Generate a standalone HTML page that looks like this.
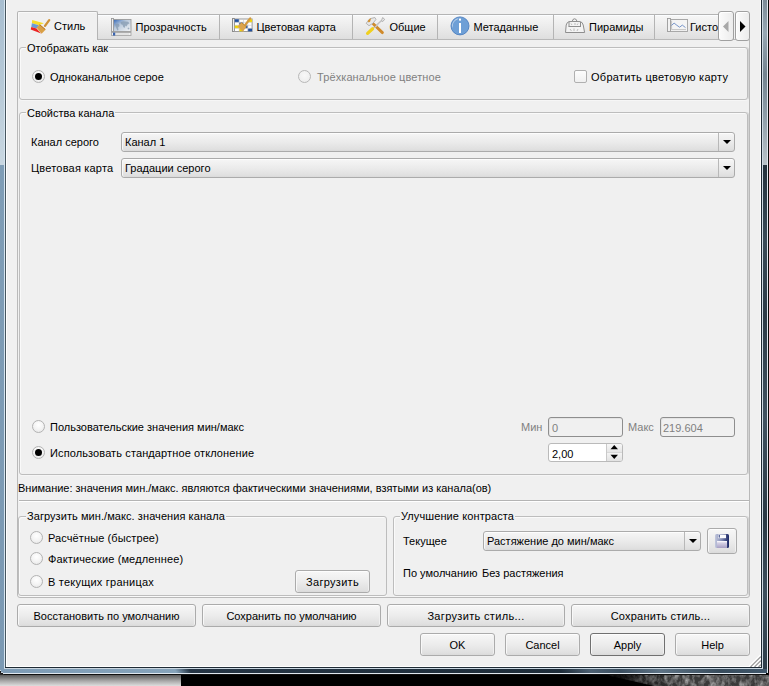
<!DOCTYPE html>
<html><head><meta charset="utf-8">
<style>
*{box-sizing:border-box}
html,body{margin:0;padding:0;width:769px;height:686px;overflow:hidden;background:#000}
body{position:relative;font-family:"Liberation Sans",sans-serif;font-size:11px;color:#000}
.a{position:absolute}
.t{position:absolute;font-size:11px;line-height:13px;white-space:nowrap;color:#000}
.g{color:#808080}
.gb{position:absolute;border:1px solid #bdbdbd;border-radius:3px;box-shadow:inset 1px 1px 0 #fafafa,0 1px 0 #fafafa}
.gbt{position:absolute;background:#f0f0f0;padding:0 1px;font-size:11px;line-height:13px;white-space:nowrap}
.btn{position:absolute;border:1px solid #ababab;border-radius:3px;background:linear-gradient(#f7f7f7,#ececec 50%,#e0e0e0 90%,#dadada);box-shadow:inset 0 1px 0 #fdfdfd,inset 1px 0 0 #f8f8f8,inset -1px 0 0 #f0f0f0;text-align:center;line-height:23px;font-size:11px;white-space:nowrap}
.cb{position:absolute;border:1px solid #ababab;border-radius:3px;background:linear-gradient(#f6f6f6,#ebebeb 50%,#e0e0e0 90%,#dadada);box-shadow:inset 0 1px 0 #fdfdfd,inset 1px 0 0 #f8f8f8}
.cb .sep{position:absolute;right:15px;top:0;bottom:0;width:1px;background:#b8b8b8}
.cb .arr{position:absolute;right:3.5px;top:7px;width:0;height:0;border-left:4px solid transparent;border-right:4px solid transparent;border-top:4px solid #000}
.cb .tx{position:absolute;left:3px;top:3px;line-height:13px;white-space:nowrap}
.rb{position:absolute;width:13px;height:13px;border-radius:50%;border:1px solid #b3b3b3;background:radial-gradient(circle at 50% 35%,#ffffff,#f4f4f4 50%,#e4e4e4)}
.rb.on::after{content:"";position:absolute;left:2px;top:2px;width:7px;height:7px;border-radius:50%;background:#000}
.rb.dis{border-color:#b8b8b8;background:radial-gradient(circle at 50% 40%,#f8f8f8,#eaeaea)}
.tab{position:absolute;top:14px;height:26px;border:1px solid #b4b4b4;border-bottom:none;background:linear-gradient(#f7f7f7,#ececec 45%,#e0e0e0 90%,#dcdcdc);box-shadow:inset 0 1px 0 #fbfdff}
.tab .tx{position:absolute;top:6px;line-height:13px;white-space:nowrap}
.tab svg{position:absolute}
.le{position:absolute;border:1px solid #aaaaaa;border-radius:2px;background:#fff}
</style></head><body>
<!-- background below frame -->
<div class="a" style="left:0;top:669px;width:181px;height:17px;background:linear-gradient(#2a2a2a 0,#2a2a2a 35%,#5c5c5c 36%,#a8a8a8 70%,#dedede)"></div>
<svg class="a" style="left:590px;top:669px" width="179" height="17">
 <defs><filter id="nz" x="0" y="0" width="100%" height="100%"><feTurbulence type="fractalNoise" baseFrequency="0.2 0.15" numOctaves="3" seed="11"/><feColorMatrix type="matrix" values="0 0 0 0 1  0 0 0 0 1  0 0 0 0 1  0 1.3 0 0 -0.45"/><feComposite in2="SourceGraphic" operator="in"/></filter>
 <linearGradient id="tg" x1="0" y1="0" x2="1" y2="0"><stop offset="0" stop-color="#000"/><stop offset="0.25" stop-color="#1c1c1c"/><stop offset="0.45" stop-color="#3a3a3a"/><stop offset="1" stop-color="#3a3a3a"/></linearGradient>
 <linearGradient id="tm" x1="0" y1="0" x2="1" y2="0"><stop offset="0" stop-color="#000"/><stop offset="0.2" stop-color="#444"/><stop offset="0.4" stop-color="#fff"/><stop offset="1" stop-color="#fff"/></linearGradient>
 <mask id="mk"><rect width="179" height="17" fill="url(#tm)"/></mask></defs>
 <polygon points="16,6 179,6 179,17 64,17" fill="url(#tg)"/>
 <g mask="url(#mk)"><polygon points="16,6 179,6 179,17 64,17" fill="#fff" filter="url(#nz)" opacity="0.85"/></g>
</svg>

<!-- window client -->
<div class="a" style="left:7px;top:0;width:753px;height:666px;background:#f0f0f0"></div>
<!-- left frame -->
<div class="a" style="left:0;top:0;width:4px;height:165px;background:linear-gradient(#a8bed0,#b6c9d7 50%,#c9d7e1)"></div><div class="a" style="left:0;top:165px;width:4px;height:504px;background:linear-gradient(#7f9db6,#7b99b3)"></div>
<div class="a" style="left:4px;top:0;width:1px;height:668px;background:#d6e4ef"></div>
<div class="a" style="left:5px;top:0;width:1px;height:667px;background:#47565f"></div>
<div class="a" style="left:6px;top:0;width:1px;height:666px;background:#ffffff"></div>
<!-- right frame -->
<div class="a" style="left:760px;top:0;width:1px;height:666px;background:#ffffff"></div>
<div class="a" style="left:761px;top:0;width:1px;height:668px;background:#1f2b35"></div>
<div class="a" style="left:762px;top:0;width:1px;height:668px;background:#d0dbe4"></div>
<div class="a" style="left:763px;top:0;width:4px;height:165px;background:linear-gradient(#7c8b97,#97a7b3 20%,#73838f 45%,#8e9da8 70%,#bac3c9)"></div><div class="a" style="left:763px;top:165px;width:4px;height:504px;background:linear-gradient(#24323d,#3a4b58 15%,#2c3b47 30%,#415361 50%,#2a3945 70%,#3d4f5d 85%,#2e3e4a)"></div>
<div class="a" style="left:767px;top:0;width:1px;height:673px;background:#e0e8ee"></div>
<div class="a" style="left:768px;top:0;width:1px;height:675px;background:#0a0a0a"></div>
<!-- bottom frame -->
<div class="a" style="left:6px;top:666px;width:755px;height:1px;background:#ffffff"></div>
<div class="a" style="left:5px;top:667px;width:757px;height:1px;background:#1f2b35"></div>
<div class="a" style="left:4px;top:668px;width:759px;height:1px;background:#c9d6e0"></div>
<div class="a" style="left:0;top:669px;width:767px;height:2px;background:linear-gradient(90deg,#7d9bb5 0,#86a3ba 175px,#253545 190px,#1e2d3a 560px,#4d6173 590px,#3b4f60 620px,#5e7385 660px,#384c5c 720px,#40576b 767px)"></div>
<div class="a" style="left:1px;top:671px;width:766px;height:2px;background:linear-gradient(90deg,#7d9bb5 0,#86a3ba 175px,#253545 190px,#1e2d3a 560px,#4d6173 590px,#3b4f60 620px,#5e7385 660px,#384c5c 720px,#40576b 767px)"></div>
<div class="a" style="left:0;top:670px;width:1px;height:1px;background:#d0dce6"></div>
<div class="a" style="left:0;top:671px;width:1px;height:2px;background:#1a1a1a"></div>
<div class="a" style="left:1px;top:672px;width:2px;height:1px;background:#c8d4de"></div>
<div class="a" style="left:1px;top:673px;width:2px;height:1px;background:#151515"></div>
<div class="a" style="left:3px;top:673px;width:763px;height:1px;background:#dfe7ee"></div>
<div class="a" style="left:4px;top:674px;width:762px;height:1px;background:#101010"></div>

<svg class="a" style="left:747px;top:653px" width="14" height="14">
 <g stroke-width="1.3" stroke-linecap="butt">
 <line x1="1.5" y1="14" x2="14" y2="1.5" stroke="#ffffff"/>
 <line x1="3.5" y1="14" x2="14" y2="3.5" stroke="#9c9c9c"/>
 <line x1="5.5" y1="14" x2="14" y2="5.5" stroke="#ffffff"/>
 <line x1="7.5" y1="14" x2="14" y2="7.5" stroke="#9c9c9c"/>
 <line x1="9.5" y1="14" x2="14" y2="9.5" stroke="#ffffff"/>
 <line x1="11.5" y1="14" x2="14" y2="11.5" stroke="#9c9c9c"/>
 </g></svg>
<!-- tabs -->
<div class="tab" style="left:97px;width:123px"></div>
<div class="tab" style="left:219px;width:134px"></div>
<div class="tab" style="left:352px;width:86px"></div>
<div class="tab" style="left:437px;width:117px"></div>
<div class="tab" style="left:553px;width:102px"></div>
<div class="tab" style="left:654px;width:80px"></div>
<div class="t" style="left:135.5px;top:21px">Прозрачность</div>
<div class="t" style="left:256.4px;top:21px">Цветовая карта</div>
<div class="t" style="left:389.5px;top:21px">Общие</div>
<div class="t" style="left:473.5px;top:21px">Метаданные</div>
<div class="t" style="left:589px;top:21px">Пирамиды</div>
<div class="a" style="left:690px;top:15px;width:28px;height:20px;overflow:hidden"><div class="t" style="left:0px;top:6px">Гистограмма</div></div>
<!-- selected tab -->
<div class="a" style="left:17px;top:11px;width:81px;height:29px;border:1px solid #b4b4b4;border-bottom:none;border-radius:2px 2px 0 0;background:#f0f0f0;box-shadow:inset 1px 1px 0 #f9f9f9;z-index:2"></div>
<div class="t" style="left:54px;top:20px;z-index:3">Стиль</div>
<!-- icons -->
<svg class="a" style="left:30px;top:18px;z-index:3" width="22" height="18" viewBox="0 0 22 18">
 <polygon points="2.2,1.9 13.9,5.2 8.9,7.3 1.9,5.2" fill="#f7dc2a"/>
 <polygon points="1.9,5.2 8.9,7.3 6.5,10.4 1.3,9.1" fill="#6b9bd6"/>
 <polygon points="1.3,9.1 6.5,10.4 11.2,15.5 0.7,11.6" fill="#ec2424"/>
 <line x1="15" y1="7.9" x2="19.2" y2="2.1" stroke="#cf9238" stroke-width="2.3" stroke-linecap="round"/>
 <polygon points="9.7,6.3 15.7,11.4 11.6,15.7 6.7,9.7" fill="#d9a046"/>
 <line x1="9.7" y1="6.8" x2="15.2" y2="11.4" stroke="#b9782a" stroke-width="1"/>
</svg>
<svg class="a" style="left:110px;top:17px" width="23" height="20" viewBox="0 0 23 20">
 <defs><linearGradient id="mg" x1="0" y1="0" x2="1" y2="1"><stop offset="0" stop-color="#3166b6"/><stop offset="0.4" stop-color="#b9c9dc"/><stop offset="1" stop-color="#f6f6f6"/></linearGradient></defs>
 <rect x="1.5" y="1.5" width="2" height="13" fill="#f2f2f2" stroke="#9a9a9a" stroke-width="0.9"/>
 <rect x="3.5" y="2.5" width="17.5" height="12" fill="url(#mg)" stroke="#9c9c9c" stroke-width="0.9"/>
 <path d="M5,7.5 q2,-1.5 4,-0.5 l0.5,2 -1.5,1.5 0.5,2.5 -1.2,0.5 -1,-2.5 z M10.5,5 l3,-0.8 4.5,0.5 1.5,1.5 -2,1.2 -1,2 -1,-1 -1,2.5 -1.2,-1 -0.8,-2.2 -1.5,-0.5 z M17.5,11 l1.5,-0.5 0.5,1.5 -1.5,0.5z" fill="#8499b0" opacity="0.75"/>
 <rect x="1.5" y="15.5" width="19.5" height="3" fill="#f0f0f0" stroke="#a8a8a8" stroke-width="0.9"/>
 <path d="M6,16 v2 M8,16 v2 M10,16 v2 M12,16 v2 M14,16 v2 M16,16 v2 M18,16 v2" stroke="#c8c8c8" stroke-width="0.6"/>
 <rect x="3" y="15.6" width="2.2" height="3" fill="#3b64b0"/>
</svg>
<svg class="a" style="left:231px;top:17px" width="23" height="17" viewBox="0 0 23 17">
 <rect x="1.5" y="1.5" width="2" height="13" fill="#eee" stroke="#8c8c8c"/>
 <rect x="3.5" y="2" width="17.6" height="12.5" fill="#fff" stroke="#9a9a9a"/>
 <rect x="3.8" y="2.3" width="4.3" height="3" fill="#1f4f9f"/><rect x="16.8" y="2.3" width="4.3" height="3" fill="#f3d400"/>
 <rect x="8.1" y="5.3" width="4.3" height="3" fill="#1f4f9f"/>
 <rect x="3.8" y="8.3" width="4.3" height="3" fill="#f3d400"/><rect x="12.5" y="8.3" width="4.3" height="3" fill="#1f4f9f"/>
 <rect x="8.1" y="11.3" width="4.3" height="3" fill="#f3d400"/><rect x="16.8" y="11.3" width="4.3" height="3" fill="#1f4f9f"/>
 <path d="M3.8,5.3 H21 M3.8,8.3 H21 M3.8,11.3 H21 M8.1,2.3 V14.3 M12.5,2.3 V14.3 M16.8,2.3 V14.3" stroke="#c8c8c8" stroke-width="0.6"/>
 <line x1="14.2" y1="8" x2="19.2" y2="1.4" stroke="#d39a40" stroke-width="2.2" stroke-linecap="round"/>
 <polygon points="6.6,9.4 10.4,5.2 15.6,9.6 11.8,14.8" fill="#dca44c"/><line x1="10.4" y1="5.6" x2="15.2" y2="9.6" stroke="#c0852f" stroke-width="0.8"/>
</svg>
<svg class="a" style="left:365px;top:16px" width="21" height="21" viewBox="0 0 21 21">
 <path d="M17.6,1.6 l2,1.6 -1.6,2.2 -1.6,-0.4 z" fill="#f0f0f0" stroke="#a8a8a8" stroke-width="0.9"/>
 <line x1="16.6" y1="4.6" x2="7.8" y2="12.6" stroke="#c0c0c0" stroke-width="1.4"/>
 <line x1="7.6" y1="12.8" x2="2.6" y2="17.4" stroke="#f0d01e" stroke-width="3.2" stroke-linecap="round"/>
 <line x1="8.4" y1="8" x2="17.4" y2="16.6" stroke="#d08a2a" stroke-width="2.9" stroke-linecap="round"/>
 <line x1="13.2" y1="8.2" x2="10" y2="11.2" stroke="#c8c8c8" stroke-width="1.2"/>
 <polygon points="1.2,7.3 4.8,2.8 9.8,1.5 11,3.4 7.9,7.3 4,9.7" fill="#e8e8e8" stroke="#a4a4a4" stroke-width="0.8"/>
 <path d="M2.6,5 L4.8,2.8 6,2.6 5.2,5.6 3.8,6.6 z" fill="#d4902e"/>
</svg>
<svg class="a" style="left:450px;top:16px" width="21" height="21" viewBox="0 0 21 21">
 <circle cx="10" cy="9.9" r="9" fill="#6e9fd6" stroke="#4d7fc0" stroke-width="0.9"/>
 <path d="M2.3,12 A8,8 0 0 1 8.5,2 L7.5,3.5 A7,7 0 0 0 2.8,10 z" fill="#c9dbef" opacity="0.8"/>
 <rect x="9" y="2.6" width="2" height="2" fill="#fff"/>
 <rect x="9" y="7" width="2" height="10" fill="#fff"/>
</svg>
<svg class="a" style="left:564px;top:18px" width="23" height="17" viewBox="0 0 23 17">
 <path d="M1.5,14.5 L2.2,7 Q3,4 5,3.6 L8.2,3.5 Q8.6,0.8 10.5,0.8 Q12.6,0.8 13,3.5 L16,3.6 Q18.6,4 19.2,7 L20.6,14.5 z" fill="#f3f3f3" stroke="#8e8e8e" stroke-width="1"/>
 <path d="M4.5,8.5 H17 M5,8.5 V4 M16.5,8.5 V4 M8.2,3.5 H13" fill="none" stroke="#8e8e8e" stroke-width="1"/>
 <path d="M6,11 l1.5,2 M10,10.5 v2.5 M14,11 l-1,2 M7,5.5 l1,1.5 M11,5 v2 M14,5.5 l-1,1.5" stroke="#b5b5b5" stroke-width="0.9"/>
</svg>
<svg class="a" style="left:666px;top:17px" width="24" height="17" viewBox="0 0 24 17">
 <rect x="1.5" y="1.5" width="3" height="13" fill="#f2f2f2" stroke="#9a9a9a" stroke-width="0.9"/>
 <rect x="4.5" y="2.5" width="17" height="12" fill="#f4f4f4" stroke="#a0a0a0" stroke-width="0.9"/>
 <path d="M5.6,3.6 V12.6 H20" fill="none" stroke="#b0b0b0" stroke-width="0.7"/>
 <polyline points="5.4,8.5 8.1,6.1 10.9,8.3 13.6,10.2 16.3,8.1 19.5,10.6" fill="none" stroke="#6a8ac4" stroke-width="0.9"/>
</svg>
<!-- tab scroll buttons -->
<div class="a" style="left:718px;top:11px;width:16px;height:30px;border:1px solid #a0a0a0;border-radius:3px;background:linear-gradient(90deg,#fbfbfb,#ececec);box-shadow:inset 1px 1px 0 #fff;z-index:3"></div>
<svg class="a" style="left:718px;top:11px;z-index:4" width="16" height="30"><polygon points="5,15.5 10.5,10 10.5,21" fill="#a8a8a8"/></svg>
<div class="a" style="left:735px;top:11px;width:15px;height:30px;border:1px solid #a0a0a0;border-radius:3px;background:linear-gradient(90deg,#fbfbfb,#ececec);box-shadow:inset 1px 1px 0 #fff;z-index:3"></div>
<svg class="a" style="left:735px;top:11px;z-index:4" width="15" height="30"><polygon points="10.5,15.5 5,10 5,21" fill="#000"/></svg>
<!-- pane -->
<div class="a" style="left:17px;top:39px;width:733px;height:559px;border:1px solid #b9b9b9;border-radius:0 0 3px 3px;z-index:1"></div>

<!-- group 1 -->
<div class="gb" style="left:19px;top:47px;width:729px;height:53px;box-shadow:inset 1px 1px 0 #fafafa,0 1px 0 #f6f6f6,1px 0 0 #d2d2d2"></div>
<div class="gbt" style="left:26px;top:42px">Отображать как</div>
<div class="rb on" style="left:32px;top:70px"></div>
<div class="t" style="left:50px;top:71px">Одноканальное серое</div>
<div class="rb dis" style="left:298px;top:70px"></div>
<div class="t g" style="letter-spacing:0.1px;left:317px;top:71px">Трёхканальное цветное</div>
<div class="a" style="left:574px;top:70px;width:13px;height:13px;border:1px solid #b0b0b0;border-radius:2px;background:linear-gradient(#fdfdfd,#f0f0f0)"></div>
<div class="t" style="letter-spacing:0.28px;left:591px;top:71px">Обратить цветовую карту</div>

<!-- group 2 -->
<div class="gb" style="left:19px;top:112px;width:729px;height:363px;box-shadow:inset 1px 1px 0 #fafafa,0 1px 0 #f6f6f6,1px 0 0 #d2d2d2"></div>
<div class="gbt" style="left:26px;top:107px">Свойства канала</div>
<div class="t" style="left:31px;top:136px">Канал серого</div>
<div class="cb" style="left:121px;top:132px;width:614px;height:20px"><div class="tx">Канал 1</div><div class="sep"></div><div class="arr"></div></div>
<div class="t" style="left:31px;top:162px;letter-spacing:0.2px">Цветовая карта</div>
<div class="cb" style="left:121px;top:158px;width:614px;height:20px"><div class="tx">Градации серого</div><div class="sep"></div><div class="arr"></div></div>

<div class="rb" style="left:32px;top:420px"></div>
<div class="t" style="left:50px;top:421px">Пользовательские значения мин/макс</div>
<div class="rb on" style="left:32px;top:446px"></div>
<div class="t" style="letter-spacing:0.11px;left:50px;top:447px">Использовать стандартное отклонение</div>

<div class="t g" style="left:521px;top:421px">Мин</div>
<div class="a" style="left:548px;top:417px;width:75px;height:20px;border:1px solid #8e8e8e;border-radius:3px;background:#f0f0f0;box-shadow:inset 1px 1px 0 #e4e4e4"></div>
<div class="t g" style="left:552px;top:422px">0</div>
<div class="t g" style="left:628px;top:421px">Макс</div>
<div class="a" style="left:660px;top:417px;width:75px;height:20px;border:1px solid #8e8e8e;border-radius:3px;background:#f0f0f0;box-shadow:inset 1px 1px 0 #e4e4e4"></div>
<div class="t g" style="left:663px;top:422px">219.604</div>
<div class="a" style="left:548px;top:443px;width:75px;height:19px;border:1px solid #bababa;border-radius:3px;background:#fff"></div>
<div class="a" style="left:606px;top:444px;width:16px;height:17px;border-left:1px solid #c9c9c9;border-radius:0 2px 2px 0;background:linear-gradient(#f7f7f7,#e6e6e6 47%,#d8d8d8 50%,#f4f4f4 53%,#e2e2e2)"></div>
<svg class="a" style="left:606px;top:443px" width="17" height="19"><polygon points="4.5,6.2 12,6.2 8.25,2" fill="#000"/><polygon points="4.5,11.8 12,11.8 8.25,16" fill="#000"/></svg>
<div class="t" style="left:552px;top:448px">2,00</div>

<div class="t" style="letter-spacing:-0.012px;left:18px;top:482px">Внимание: значения мин./макс. являются фактическими значениями, взятыми из канала(ов)</div>
<div class="a" style="left:19px;top:500px;width:730px;height:1px;background:#b4b4b4"></div>
<div class="a" style="left:19px;top:501px;width:730px;height:1px;background:#ffffff"></div>

<!-- group 3 -->
<div class="gb" style="left:18px;top:516px;width:369px;height:80px"></div>
<div class="gbt" style="letter-spacing:0.07px;left:26px;top:510px">Загрузить мин./макс. значения канала</div>
<div class="rb" style="left:30px;top:531px"></div>
<div class="t" style="letter-spacing:0.1px;left:48px;top:532px">Расчётные (быстрее)</div>
<div class="rb" style="left:30px;top:552px"></div>
<div class="t" style="letter-spacing:0.13px;left:48px;top:553px">Фактические (медленнее)</div>
<div class="rb" style="left:30px;top:575px"></div>
<div class="t" style="letter-spacing:0.22px;left:48px;top:576px">В текущих границах</div>
<div class="btn" style="letter-spacing:0.3px;left:295px;top:570px;width:75px;height:23px">Загрузить</div>

<!-- group 4 -->
<div class="gb" style="left:393px;top:516px;width:355px;height:80px;box-shadow:inset 1px 1px 0 #fafafa,0 1px 0 #f6f6f6,1px 0 0 #d2d2d2"></div>
<div class="gbt" style="letter-spacing:0.1px;left:400px;top:510px">Улучшение контраста</div>
<div class="t" style="left:403px;top:535px">Текущее</div>
<div class="cb" style="left:483px;top:531px;width:218px;height:20px"><div class="tx">Растяжение до мин/макс</div><div class="sep"></div><div class="arr"></div></div>
<div class="btn" style="left:707px;top:528px;width:30px;height:26px"></div>
<svg class="a" style="left:714px;top:533px" width="16" height="16" viewBox="0 0 16 16">
 <defs>
  <linearGradient id="fb" x1="0" y1="0" x2="1" y2="0"><stop offset="0" stop-color="#c3c8de"/><stop offset="0.5" stop-color="#7d87b0"/><stop offset="1" stop-color="#1b2766"/></linearGradient>
  <linearGradient id="fl" x1="0" y1="0" x2="0" y2="1"><stop offset="0" stop-color="#e8e4f2"/><stop offset="1" stop-color="#a69fc4"/></linearGradient>
 </defs>
 <rect x="1" y="1" width="14" height="14" rx="1.5" fill="url(#fb)"/>
 <rect x="4" y="1.6" width="8" height="3.6" fill="#fbfbfd"/>
 <rect x="4.6" y="2" width="1.4" height="2.6" fill="#5d6a9c"/>
 <rect x="3" y="8" width="10" height="7" fill="url(#fl)"/>
 <rect x="3" y="8" width="10" height="1.2" fill="#f6f4fb"/>
</svg>
<div class="t" style="left:403px;top:567px">По умолчанию</div>
<div class="t" style="left:482px;top:567px">Без растяжения</div>

<!-- buttons -->
<div class="btn" style="left:17px;top:604px;width:179px;height:23px">Восстановить по умолчанию</div>
<div class="btn" style="left:202px;top:604px;width:179px;height:23px">Сохранить по умолчанию</div>
<div class="btn" style="letter-spacing:0.33px;left:387px;top:604px;width:178px;height:23px">Загрузить стиль...</div>
<div class="btn" style="letter-spacing:0.22px;left:571px;top:604px;width:179px;height:23px">Сохранить стиль...</div>

<div class="btn" style="left:420px;top:633px;width:75px;height:23px">OK</div>
<div class="btn" style="left:505px;top:633px;width:75px;height:23px">Cancel</div>
<div class="btn" style="left:590px;top:633px;width:75px;height:23px;border-color:#707070">Apply</div>
<div class="btn" style="left:675px;top:633px;width:75px;height:23px">Help</div>

</body></html>
